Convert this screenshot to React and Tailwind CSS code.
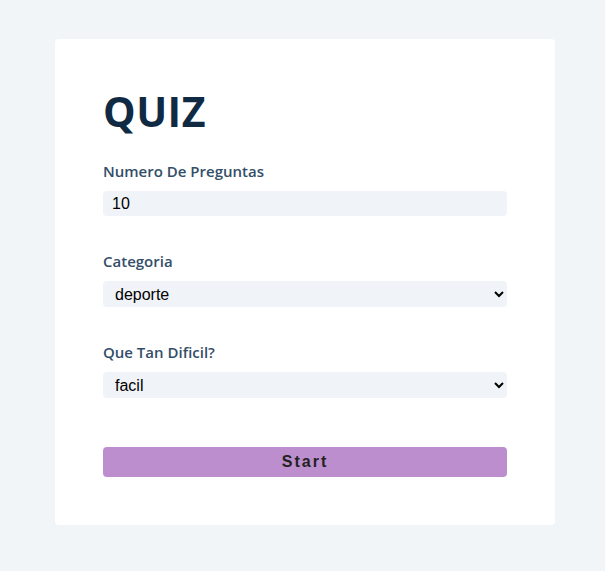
import React from "react";

function Field({ label, children }) {
  return (
    <div className="flex flex-col">
      <label className="text-[15px] font-semibold text-[#334e68] mb-[10px] leading-[20px]">
        {label}
      </label>
      {children}
    </div>
  );
}

export default function App() {
  return (
    <div
      className="min-h-[571px] bg-[#f1f5f8] pt-[39px] px-[55px]"
      style={{ fontFamily: "'Open Sans', sans-serif" }}
    >
      <div className="w-[500px] bg-white rounded-[4px] px-12 pt-[42px] pb-12">
        <h1 className="text-[41px] font-bold tracking-[0.5px] text-[#102a43] leading-[60px] mb-[20px]">
          QUIZ
        </h1>
        <form className="flex flex-col" onSubmit={(e) => e.preventDefault()}>
          <Field label="Numero De Preguntas">
            <input
              type="number"
              defaultValue={10}
              className="h-[25px] bg-[#f0f4f8] rounded-[4px] px-[9px] text-[16px] text-black outline-none"
              style={{ fontFamily: "'Liberation Sans', Arial, sans-serif" }}
            />
          </Field>
          <div className="h-[35px]" />
          <Field label="Categoria">
            <select
              defaultValue="deporte"
              className="h-[26px] bg-[#f0f4f8] rounded-[4px] px-[8px] text-[16px] text-black outline-none"
              style={{ fontFamily: "'Liberation Sans', Arial, sans-serif" }}
            >
              <option value="deporte">deporte</option>
              <option value="historia">historia</option>
              <option value="politica">politica</option>
            </select>
          </Field>
          <div className="h-[35px]" />
          <Field label="Que Tan Dificil?">
            <select
              defaultValue="facil"
              className="h-[26px] bg-[#f0f4f8] rounded-[4px] px-[8px] text-[16px] text-black outline-none"
              style={{ fontFamily: "'Liberation Sans', Arial, sans-serif" }}
            >
              <option value="facil">facil</option>
              <option value="medio">medio</option>
              <option value="dificil">dificil</option>
            </select>
          </Field>
          <button
            type="submit"
            className="mt-[49px] h-[30px] w-full bg-[#bc8ecd] rounded-[4px] text-[16px] font-bold tracking-[2px] text-[#222]"
            style={{ fontFamily: "'Liberation Sans', Arial, sans-serif" }}
          >
            Start
          </button>
        </form>
      </div>
    </div>
  );
}
